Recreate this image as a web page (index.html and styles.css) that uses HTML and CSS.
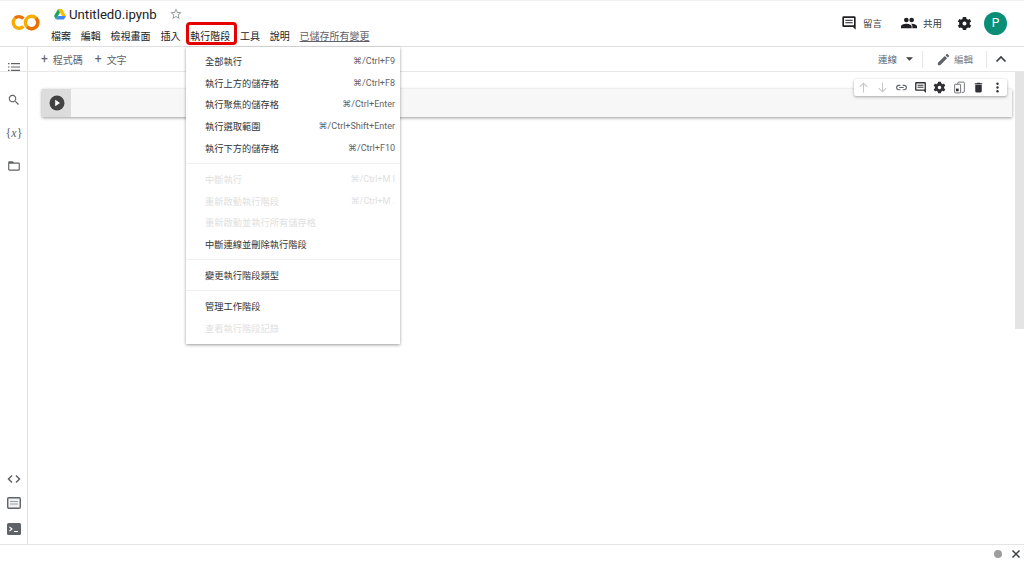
FILE: index.html
```html
<!DOCTYPE html>
<html lang="zh-Hant">
<head>
<meta charset="utf-8">
<title>Untitled0.ipynb - Colaboratory</title>
<link rel="stylesheet" href="styles.css">
</head>
<body>
<div class="app">
  <header class="header">
    <div class="logo">
      <svg width="29" height="17" viewBox="0 0 29 17"><path d="M12.400 4.600A5.900 5.900 0 0 0 3.800 4.300" fill="none" stroke="#e8710a" stroke-width="3.400"/><path d="M3.800 4.300A5.900 5.900 0 0 0 12.400 12.400" fill="none" stroke="#f9ab00" stroke-width="3.400"/><circle cx="20.600" cy="8.500" r="6.200" fill="none" stroke="#f9ab00" stroke-width="3.400"/><path d="M25 4.100a6.200 6.200 0 0 1-8.800 8.800" fill="none" stroke="#e8710a" stroke-width="3.400"/></svg>
    </div>
    <div class="doc">
      <div class="title-row">
        <svg class="drive" width="12" height="11" viewBox="0 0 12 11"><path d="M4 0h4l4 7H8z" fill="#fbbc04"/><path d="M4 0l2 3.500L2 10.500 0 7z" fill="#1ea362"/><path d="M2 10.500 4 7h8l-2 3.500z" fill="#4285f4"/></svg>
        <span class="title">Untitled0.ipynb</span>
        <svg class="star" width="14" height="14" viewBox="0 0 24 24"><path d="m22 9.200-7.200-.6L12 2 9.200 8.600 2 9.200l5.500 4.700L5.800 21l6.200-3.700 6.200 3.700-1.600-7.100zM12 15.400l-3.800 2.300 1-4.300-3.300-2.900 4.400-.4L12 6.100l1.700 4 4.400.4-3.300 2.900 1 4.300z" fill="#9aa0a6"/></svg>
      </div>
      <nav class="menubar">
        <span class="m">檔案</span>
        <span class="m">編輯</span>
        <span class="m">檢視畫面</span>
        <span class="m">插入</span>
        <span class="m m-active">執行階段</span>
        <span class="m">工具</span>
        <span class="m">說明</span>
        <span class="saved">已儲存所有變更</span>
      </nav>
    </div>
    <div class="head-right">
      <span class="hbtn"><svg width="16" height="16" viewBox="0 0 24 24"><path fill-rule="evenodd" d="M22 4a2 2 0 0 0-2-2H4a2 2 0 0 0-2 2v12a2 2 0 0 0 2 2h14l4 4zM4.500 4.500h15v11h-15z" fill="#202124"/><path d="M6.500 7h11v1.700h-11zM6.500 10.700h11v1.700h-11z" fill="#202124"/></svg>留言</span>
      <span class="hbtn share"><svg width="16" height="16" viewBox="0 0 24 24"><path d="M16 11a3.500 3.500 0 1 0 0-7 3.500 3.500 0 0 0 0 7zm-8 0a3.500 3.500 0 1 0 0-7 3.500 3.500 0 0 0 0 7zm0 2c-2.700 0-8 1.300-8 4v3h16v-3c0-2.700-5.300-4-8-4zm8 0h-1c1.200.9 2 2.100 2 4v3h7v-3c0-2.700-5.300-4-8-4z" fill="#202124"/></svg>共用</span>
      <svg class="gear" width="15" height="15" viewBox="0 0 24 24"><path fill-rule="evenodd" d="M20.400 13.500a8 8 0 0 0 0-3l2.300-1.800-2.300-4-2.700 1.100a8 8 0 0 0-2.600-1.500L14.600 1.500h-5.200l-.5 2.800a8 8 0 0 0-2.600 1.500L3.600 4.700l-2.300 4 2.300 1.800a8 8 0 0 0 0 3l-2.300 1.800 2.300 4 2.700-1.100a8 8 0 0 0 2.600 1.500l.5 2.800h5.200l.5-2.800a8 8 0 0 0 2.600-1.500l2.700 1.100 2.300-4zM12 15.200a3.200 3.200 0 1 1 0-6.400 3.200 3.200 0 0 1 0 6.400z" fill="#202124"/></svg>
      <span class="avatar">P</span>
    </div>
  </header>

  <div class="toolbar">
    <div class="side-cap"></div>
    <div class="tb-left">
      <span class="tbtn"><span class="plus">+</span>程式碼</span>
      <span class="tbtn"><span class="plus">+</span>文字</span>
    </div>
    <div class="tb-right">
      <span class="conn">連線</span>
      <svg class="caret" width="7" height="4" viewBox="0 0 8 4"><path d="M0 0h8L4 4z" fill="#3c4043"/></svg>
      <span class="vsep"></span>
      <span class="edit"><svg width="15" height="15" viewBox="0 0 24 24"><path d="M3 17.300V21h3.700L17.800 9.900l-3.700-3.700zM20.700 7a1 1 0 0 0 0-1.400l-2.300-2.300a1 1 0 0 0-1.400 0l-1.800 1.800 3.700 3.700z" fill="#5f6368"/></svg>編輯</span>
      <span class="vsep vsep-end"></span>
      <svg class="chev" width="12" height="8" viewBox="0 0 12 8"><path d="M1.500 6.500 6 2l4.500 4.500" fill="none" stroke="#3c4043" stroke-width="1.700"/></svg>
    </div>
  </div>

  <div class="body">
    <aside class="sidebar">
      <div class="side-top">
        <svg width="14" height="14" viewBox="0 0 14 14"><path d="M1 3h1.500v1.200H1zM4 3h9v1.200H4zM1 6.400h1.500v1.200H1zM4 6.400h9v1.200H4zM1 9.800h1.500V11H1zM4 9.800h9V11H4z" fill="#5f6368"/></svg>
        <svg width="14" height="14" viewBox="0 0 24 24"><path d="M15.500 14h-.8l-.3-.3a6.500 6.500 0 1 0-.7.700l.3.300v.8l5 5 1.500-1.500zm-6 0a4.500 4.500 0 1 1 0-9 4.500 4.500 0 0 1 0 9z" fill="#5f6368"/></svg>
        <span class="vars">{<i>x</i>}</span>
        <svg width="14" height="14" viewBox="0 0 24 24"><path d="M20 6h-8l-2-2H4a2 2 0 0 0-2 2v12a2 2 0 0 0 2 2h16a2 2 0 0 0 2-2V8a2 2 0 0 0-2-2zm0 12H4V8h16z" fill="#5f6368"/></svg>
      </div>
      <div class="side-bottom">
        <svg width="14" height="14" viewBox="0 0 14 14"><path d="M5 3.500 1.500 7 5 10.500M9 3.500 12.500 7 9 10.500" fill="none" stroke="#5f6368" stroke-width="1.500"/></svg>
        <svg class="kb" width="14" height="12" viewBox="0 0 14 12"><rect x=".7" y=".7" width="12.600" height="10.600" rx="1.200" fill="#f1f1f1" stroke="#5f6368" stroke-width="1.400"/><path d="M3 4.500h8M3 7h8" stroke="#9aa0a6"/></svg>
        <svg width="14" height="12" viewBox="0 0 14 12"><rect width="14" height="12" rx="1.500" fill="#5f6368"/><path d="M2.500 4 5 6 2.500 8M7 8.500h4" fill="none" stroke="#fff" stroke-width="1.100"/></svg>
      </div>
    </aside>
    <main class="main">
      <div class="cell">
        <div class="gutter"><span class="play"><svg width="16" height="16" viewBox="0 0 16 16"><circle cx="8" cy="8" r="7.500" fill="#424242"/><path d="M6.200 4.800v6.400L11 8z" fill="#fff"/></svg></span></div>
        <div class="cell-input"></div>
      </div>
      <div class="cell-tools">
        <svg width="13" height="13" viewBox="0 0 24 24"><path d="M12 21V5M5 11l7-7 7 7" fill="none" stroke="#c4c7ca" stroke-width="2"/></svg>
        <svg width="13" height="13" viewBox="0 0 24 24"><path d="M12 3v16M5 13l7 7 7-7" fill="none" stroke="#c4c7ca" stroke-width="2"/></svg>
        <svg width="13" height="13" viewBox="0 0 24 24"><path d="M10 8H7a4 4 0 0 0 0 8h3M14 8h3a4 4 0 0 1 0 8h-3M8 12h8" fill="none" stroke="#5f6368" stroke-width="2"/></svg>
        <svg width="13" height="13" viewBox="0 0 24 24"><path fill-rule="evenodd" d="M22 4a2 2 0 0 0-2-2H4a2 2 0 0 0-2 2v12a2 2 0 0 0 2 2h14l4 4zM4.500 4.500h15v11h-15z" fill="#303134"/><path d="M6.500 7h11v1.700h-11zM6.500 10.700h11v1.700h-11z" fill="#303134"/></svg>
        <svg width="13" height="13" viewBox="0 0 24 24"><path fill-rule="evenodd" d="M20.400 13.500a8 8 0 0 0 0-3l2.300-1.800-2.300-4-2.700 1.100a8 8 0 0 0-2.600-1.500L14.600 1.500h-5.200l-.5 2.800a8 8 0 0 0-2.600 1.500L3.600 4.700l-2.300 4 2.300 1.800a8 8 0 0 0 0 3l-2.300 1.800 2.300 4 2.700-1.100a8 8 0 0 0 2.600 1.500l.5 2.800h5.200l.5-2.800a8 8 0 0 0 2.600-1.500l2.700 1.100 2.300-4zM12 15.200a3.200 3.200 0 1 1 0-6.400 3.200 3.200 0 0 1 0 6.400z" fill="#303134"/></svg>
        <svg width="13" height="13" viewBox="0 0 24 24"><path d="M10 2h9a2 2 0 0 1 2 2v15a2 2 0 0 1-2 2h-3M10 2 8 6M4 6h9a1 1 0 0 1 1 1v14a1 1 0 0 1-1 1H4a1 1 0 0 1-1-1V7a1 1 0 0 1 1-1z" fill="none" stroke="#5f6368" stroke-width="1.600"/><path d="M5.500 14h5v5h-5z" fill="#303134"/></svg>
        <svg width="13" height="13" viewBox="0 0 24 24"><path d="M6 19a2 2 0 0 0 2 2h8a2 2 0 0 0 2-2V7H6zM19 4h-3.500l-1-1h-5l-1 1H5v2h14z" fill="#303134"/></svg>
        <svg width="13" height="13" viewBox="0 0 24 24"><circle cx="12" cy="5" r="2.200" fill="#303134"/><circle cx="12" cy="12" r="2.200" fill="#303134"/><circle cx="12" cy="19" r="2.200" fill="#303134"/></svg>
      </div>
      <div class="scrollbar"></div>
    </main>
  </div>

  <footer class="status">
    <span class="dot"></span>
    <svg width="10" height="10" viewBox="0 0 10 10"><path d="M1.500 1.500l7 7M8.500 1.500l-7 7" stroke="#3c4043" stroke-width="1.500"/></svg>
  </footer>

  <div class="menu">
    <div class="mi"><span>全部執行</span><kbd>⌘/Ctrl+F9</kbd></div>
    <div class="mi"><span>執行上方的儲存格</span><kbd>⌘/Ctrl+F8</kbd></div>
    <div class="mi"><span>執行聚焦的儲存格</span><kbd>⌘/Ctrl+Enter</kbd></div>
    <div class="mi"><span>執行選取範圍</span><kbd>⌘/Ctrl+Shift+Enter</kbd></div>
    <div class="mi"><span>執行下方的儲存格</span><kbd>⌘/Ctrl+F10</kbd></div>
    <div class="sep"></div>
    <div class="mi off"><span>中斷執行</span><kbd>⌘/Ctrl+M I</kbd></div>
    <div class="mi off"><span>重新啟動執行階段</span><kbd>⌘/Ctrl+M .</kbd></div>
    <div class="mi off"><span>重新啟動並執行所有儲存格</span></div>
    <div class="mi"><span>中斷連線並刪除執行階段</span></div>
    <div class="sep"></div>
    <div class="mi"><span>變更執行階段類型</span></div>
    <div class="sep"></div>
    <div class="mi"><span>管理工作階段</span></div>
    <div class="mi off"><span>查看執行階段記錄</span></div>
  </div>
</div>
</body>
</html>
```

FILE: styles.css
```css
* { box-sizing: border-box; }
html, body { margin: 0; padding: 0; height: 100%; overflow: hidden; }
body {
  background: #fff;
  color: #3c4043;
  font-family: Roboto, "Noto Sans CJK TC", sans-serif;
  font-size: 9.500px;
}
svg { display: block; flex: none; }
.app { position: relative; width: 1024px; height: 562px; display: flex; flex-direction: column; }

.header {
  height: 47px;
  flex: none;
  display: flex;
  border-top: 1px solid #f1f1f1;
  border-bottom: 1px solid #e0e0e0;
}
.logo { width: 51px; padding: 13px 0 0 11px; }
.doc { display: flex; flex-direction: column; }
.title-row { height: 25px; display: flex; align-items: center; padding-left: 3px; margin-top: 1px; }
.title { font-size: 13.200px; margin-left: 3px; color: #202124; }
.star { margin-left: 12px; margin-top: -1px; }
.menubar { display: flex; align-items: center; height: 17px; font-size: 10px; }
.m { margin-right: 9.800px; white-space: nowrap; color: #202124; }
.m-active { position: relative; }
.m-active::after {
  content: "";
  position: absolute;
  left: -4px; right: -7px; top: -6px; bottom: -2px;
  border: 3px solid #e60000;
  border-radius: 4px;
}
.saved { color: #5f6368; text-decoration: underline; white-space: nowrap; }

.head-right { margin-left: auto; display: flex; align-items: center; padding-right: 17px; margin-top: -1px; }
.hbtn { display: flex; align-items: center; gap: 6px; margin-left: 1px; }
.share { margin-left: 19px; }
.gear { margin-left: 15px; }
.avatar {
  width: 23px; height: 23px; border-radius: 50%;
  background: #0b8e76; color: #fff; margin-left: 12px;
  display: flex; align-items: center; justify-content: center; font-size: 12px;
}

.toolbar {
  height: 25px; flex: none; display: flex; align-items: center;
  border-bottom: 1px solid #e8e8e8;
}
.side-cap { width: 28px; height: 100%; border-right: 1px solid #e0e0e0; flex: none; }
.tb-left { display: flex; gap: 12px; padding-left: 13px; font-size: 10px; }
.tbtn { display: flex; align-items: center; gap: 5px; color: #5f6368; }
.plus { font-size: 12px; line-height: 10px; }
.tb-right { margin-left: auto; display: flex; align-items: center; padding-right: 17px; }
.conn { color: #5f6368; }
.caret { margin-left: 9px; }
.vsep { width: 1px; height: 17px; background: #e6e6e6; margin: 0 9px; }
.vsep-end { margin: 0 8px 0 10px; }
.edit { display: flex; align-items: center; gap: 3px; color: #7a7d82; margin-left: 4px; margin-right: 3px; font-size: 9.500px; }

.body { flex: 1; display: flex; min-height: 0; }
.sidebar {
  width: 28px; flex: none; border-right: 1px solid #e0e0e0;
  display: flex; flex-direction: column; justify-content: space-between; align-items: center;
  padding: 0 0 9px 1px;
}
.side-top { display: flex; flex-direction: column; align-items: center; gap: 19px; margin-top: -12px; }
.side-bottom { display: flex; flex-direction: column; align-items: center; gap: 11px; }
.kb { margin-bottom: 3px; }
.vars { font-family: "Liberation Serif", serif; font-size: 12px; height: 14px; line-height: 14px; color: #5f6368; }

.main { position: relative; flex: 1; padding: 17px 0 0 14px; }
.cell { display: flex; height: 28px; box-shadow: 0 1px 3px rgba(0,0,0,.4); width: 970px; }
.gutter { width: 29px; background: #dcdcdc; display: flex; align-items: center; justify-content: center; }
.cell-input { flex: 1; background: #f7f7f7; }
.cell-tools {
  position: absolute; right: 17.500px; top: 6.500px; height: 17px;
  display: flex; align-items: center; gap: 6.200px; padding: 0 2.500px;
  background: #fff; border-radius: 2px; box-shadow: 0 1px 3px rgba(0,0,0,.35);
}
.scrollbar { position: absolute; right: 0; top: 0; width: 9px; height: 257px; background: #e4e4e4; }

.status {
  height: 18px; flex: none; border-top: 1px solid #e4e4e4;
  display: flex; align-items: center; justify-content: flex-end; gap: 9px; padding-right: 3px;
}
.dot { width: 8px; height: 8px; background: #9e9e9e; border-radius: 50%; }

.menu {
  position: absolute; left: 186px; top: 47px; width: 214px; height: 297px;
  background: #fff; padding-top: 3px;
  box-shadow: 0 1px 3px rgba(0,0,0,.4);
  font-size: 9.250px;
}
.mi { height: 21.800px; display: flex; align-items: center; justify-content: space-between; padding: 0 5px 0 19px; color: #333; white-space: nowrap; }
.mi kbd { font-family: Roboto, "DejaVu Sans", sans-serif; font-size: 9px; color: #5f6368; }
.off, .off kbd { color: #e0e0e0; }
.sep { height: 1px; background: #efefef; margin: 4px 0; }
```
